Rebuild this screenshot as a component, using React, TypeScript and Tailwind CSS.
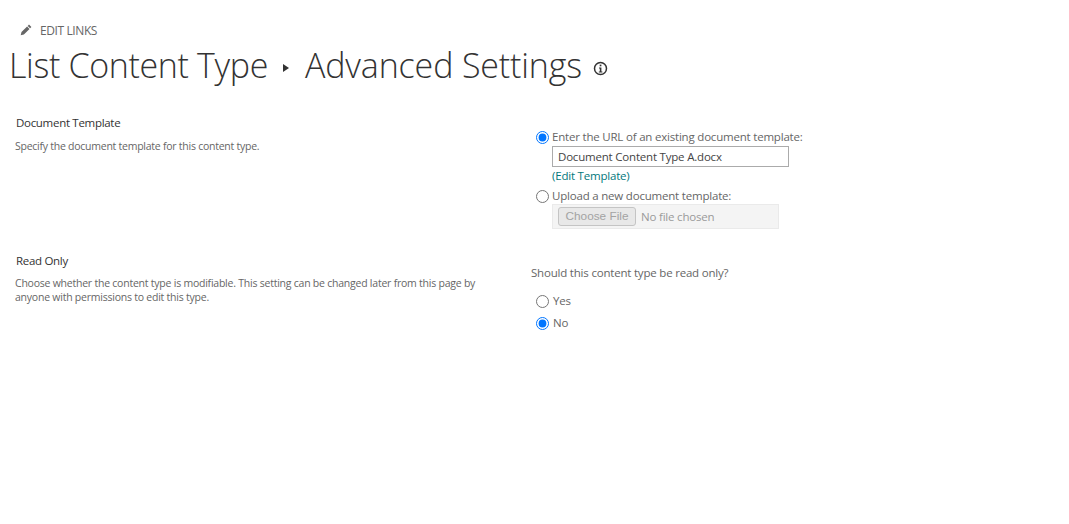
import React from "react";

function Pencil() {
  return (
    <svg width="12" height="12" viewBox="0 0 12 12" className="text-[#666] mb-[2px]" fill="currentColor">
      <path d="M9 .6l2.4 2.4-1.3 1.3-2.4-2.4zM7.1 2.5l2.4 2.4-5.6 5.6-3.2.8.8-3.2z" />
    </svg>
  );
}

export default function App() {
  return (
    <div className="h-[524px] w-[1069px] bg-white overflow-hidden font-['Open_Sans',sans-serif] text-[#444]">
      <div className="flex items-center gap-[8px] pl-[20px] pt-[21px] h-[41px] text-[12px] text-[#666]">
        <Pencil />
        <span className="tracking-[-0.4px]">EDIT LINKS</span>
      </div>
      <div className="flex items-center pl-[9px] h-[48px] font-light text-[34px] text-[#333] whitespace-nowrap">
        <span className="tracking-[-0.35px]">List Content Type</span>
        <svg width="6" height="8" viewBox="0 0 6 8" className="ml-[15px] mr-[16px] mt-[6px]" fill="#333">
          <path d="M0 0l6 4-6 4z" />
        </svg>
        <span className="tracking-[-0.15px]">Advanced Settings</span>
        <svg width="15" height="15" viewBox="0 0 15 15" className="ml-[11px] mt-[7px]" fill="none">
          <circle cx="7.5" cy="7.5" r="6" stroke="#333" strokeWidth="1.5" />
          <rect x="6.7" y="3.6" width="1.7" height="1.7" fill="#333" />
          <path d="M6 6.4h2.4v4.1h1v1H5.8v-1h1V7.4H6z" fill="#333" />
        </svg>
      </div>

      <div className="flex h-[163px] pt-[25px]">
        <div className="w-[531px] pl-[15px]">
          <div className="pl-[1px] text-[11.5px] leading-[18px] text-[#333] tracking-[-0.3px]">Document Template</div>
          <div className="mt-[7px] text-[10.5px] leading-[15px] text-[#666] tracking-[-0.25px]">
            Specify the document template for this content type.
          </div>
        </div>
        <div className="pl-[5px] text-[11.5px] text-[#666] tracking-[-0.2px]">
          <label className="flex items-center h-[20px] mt-[13px]">
            <input type="radio" name="t" defaultChecked className="m-0 w-[13px] h-[13px] mr-[3px]" />
            <span>Enter the URL of an existing document template:</span>
          </label>
          <div className="ml-[16px] mt-[-1px]">
            <input
              readOnly
              value="Document Content Type A.docx"
              className="block w-[237px] h-[21px] border border-[#ababab] px-[5px] text-[11.5px] text-[#444] outline-none"
            />
            <div className="h-[18px] leading-[18px] text-[#03787c]">(Edit Template)</div>
          </div>
          <label className="flex items-center h-[20px] mt-[1px]">
            <input type="radio" name="t" className="m-0 w-[13px] h-[13px] mr-[3px]" />
            <span>Upload a new document template:</span>
          </label>
          <div className="ml-[16px] mt-[-2px] w-[227px] h-[25px] bg-[#f4f4f4] border border-[#eaeaea] flex items-center pl-[5px] gap-[5px] text-[#9a9a9a]">
            <button disabled className="h-[19px] w-[78px] bg-[#e8e8e8] border border-[#c4c4c4] rounded-[3px] text-[11.8px] text-[#a3a3a3] font-['Liberation_Sans',sans-serif] tracking-normal">
              Choose File
            </button>
            <span>No file chosen</span>
          </div>
        </div>
      </div>

      <div className="flex">
        <div className="w-[531px] pl-[15px]">
          <div className="pl-[1px] text-[11.5px] leading-[18px] text-[#333] tracking-[-0.3px]">Read Only</div>
          <div className="mt-[6px] w-[475px] text-[10.5px] leading-[14px] text-[#666] tracking-[-0.23px]">
            Choose whether the content type is modifiable. This setting can be changed later from this page by anyone with permissions to edit this type.
          </div>
        </div>
        <div className="text-[11.5px] text-[#666] tracking-[-0.2px]">
          <div className="mt-[12px] h-[18px] leading-[18px]">Should this content type be read only?</div>
          <label className="flex items-center h-[22px] mt-[8px] pl-[5px]">
            <input type="radio" name="r" className="m-0 w-[13px] h-[13px] mr-[4px]" />
            <span>Yes</span>
          </label>
          <label className="flex items-center h-[22px] pl-[5px]">
            <input type="radio" name="r" defaultChecked className="m-0 w-[13px] h-[13px] mr-[4px]" />
            <span>No</span>
          </label>
        </div>
      </div>
    </div>
  );
}
